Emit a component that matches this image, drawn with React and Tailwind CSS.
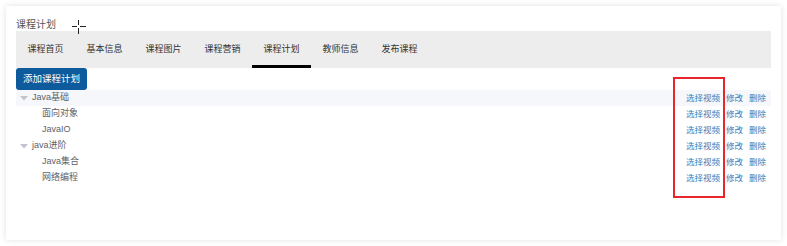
import React from 'react';

const tabs = ['课程首页', '基本信息', '课程图片', '课程营销', '课程计划', '教师信息', '发布课程'];

const rows = [
  { name: 'Java基础', level: 0, active: true },
  { name: '面向对象', level: 1 },
  { name: 'JavaIO', level: 1 },
  { name: 'java进阶', level: 0 },
  { name: 'Java集合', level: 1 },
  { name: '网络编程', level: 1 },
];

export default function App() {
  return (
    <div className="w-[787px] h-[246px] bg-white p-[6px] font-['Liberation_Sans','Noto_Sans_CJK_SC',sans-serif]">
      <div className="relative w-[775px] h-[234px] bg-white px-[10px] shadow-[0_0_6px_rgba(0,0,0,0.12)]">
        {/* title */}
        <div className="h-[25px] pt-[13px] text-[10px] leading-[12px] text-[#555]">课程计划</div>

        {/* cursor crosshair */}
        <svg className="absolute left-[66px] top-[14px]" width="14" height="14" viewBox="0 0 14 14">
          <path d="M0 6.5h5M8 6.5h6M6.5 0v5M6.5 8v6" stroke="#222" strokeWidth="1" />
        </svg>

        {/* tabs */}
        <div className="flex h-[37px] bg-[#ededed]">
          {tabs.map((t, i) => (
            <div key={t} className="relative w-[59px] flex items-center justify-center text-[9px] text-[#333]">
              {t}
              {i === 4 && <div className="absolute left-0 bottom-0 w-[59px] h-[3px] bg-black"></div>}
            </div>
          ))}
        </div>

        <button className="block w-[71px] h-[22px] rounded-[3px] bg-[#0d5b9c] text-white text-[9.5px] leading-[22px]">添加课程计划</button>

        {/* tree */}
        <div className="flex flex-col">
          {rows.map((r) => (
            <div key={r.name} className={`flex items-center h-[16px] pr-[5px] ${r.active ? 'bg-[#f5f7fa]' : ''}`}>
              {r.level === 0 ? (
                <div className="flex items-center pl-[4px]">
                  <svg width="8" height="5" viewBox="0 0 8 5" className="mr-[4px]">
                    <path d="M0 0h8L4 4.5z" fill="#c0c4cc" />
                  </svg>
                  <span className="text-[9px] text-[#606266]">{r.name}</span>
                </div>
              ) : (
                <span className="pl-[26px] text-[9px] text-[#606266]">{r.name}</span>
              )}
              <div className="ml-auto flex gap-[6px] text-[8.5px] text-[#3a7bb8]">
                <span>选择视频</span>
                <span>修改</span>
                <span>删除</span>
              </div>
            </div>
          ))}
        </div>

        {/* red highlight box */}
        <div className="absolute left-[667px] top-[71px] w-[52px] h-[121px] border-2 border-[#e8262b]"></div>
      </div>
    </div>
  );
}
